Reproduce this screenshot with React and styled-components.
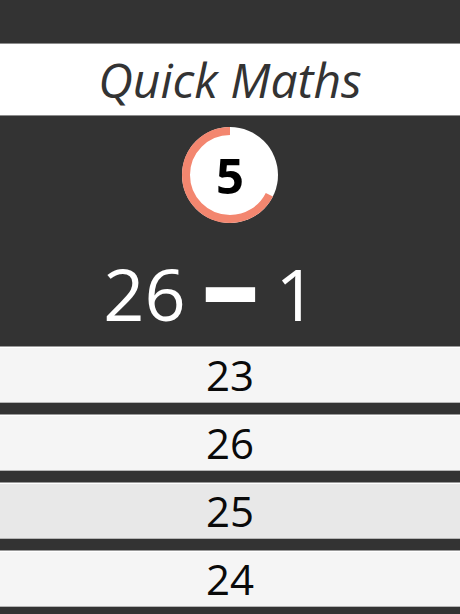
import React from "react";
import styled, { createGlobalStyle } from "styled-components";

const GlobalStyle = createGlobalStyle`
  html, body {
    margin: 0;
    padding: 0;
    background: #333333;
  }
  body {
    font-family: "Open Sans", "Noto Sans", sans-serif;
  }
  * { box-sizing: border-box; }
`;

const Page = styled.div`
  display: flex;
  flex-direction: column;
  width: 100%;
  min-height: 614px;
  background: #333333;
`;

const TopBar = styled.div`
  height: 44px;
  background: #333333;
  border-bottom: 1px solid #8c8c8c;
`;

const Header = styled.header`
  height: 72px;
  background: #ffffff;
  border-bottom: 1px solid #8c8c8c;
  display: flex;
  align-items: center;
  justify-content: center;
`;

const Title = styled.h1`
  margin: 0;
  font-family: "Open Sans", sans-serif;
  font-style: italic;
  font-weight: 400;
  font-size: 48px;
  line-height: 1;
  color: #333333;
`;

const Stage = styled.section`
  height: 230px;
  display: flex;
  flex-direction: column;
  align-items: center;
  padding-top: 11px;
`;

const Timer = styled.div`
  position: relative;
  width: 96px;
  height: 96px;
  display: flex;
  align-items: center;
  justify-content: center;
`;

const Ring = styled.svg`
  position: absolute;
  inset: 0;
`;

const Count = styled.span`
  position: relative;
  font-family: "Open Sans", sans-serif;
  font-weight: 700;
  font-size: 49px;
  line-height: 1;
  color: #000000;
`;

const Equation = styled.div`
  margin-top: 34px;
  display: flex;
  align-items: baseline;
  justify-content: center;
  gap: 20px;
  color: #ffffff;
  font-family: "Open Sans", sans-serif;
  font-size: 72px;
  line-height: 72px;
  padding-right: 40px;
`;

const Operand = styled.span``;

const Operator = styled.span`
  font-family: "DejaVu Sans", sans-serif;
  font-size: 76px;
  line-height: 72px;
  -webkit-text-stroke: 2px #ffffff;
  margin: 0 2px;
`;

const Answers = styled.div`
  display: flex;
  flex-direction: column;
  gap: 11px;
`;

const Answer = styled.button`
  height: 57px;
  width: 100%;
  margin: 0;
  padding: 0;
  border: none;
  border-top: 1px solid #9a9a9a;
  border-bottom: 1px solid #b5b5b5;
  box-shadow: inset 0 1px 0 #ffffff;
  background: ${(p) => (p.$active ? "#e8e8e8" : "#f5f5f5")};
  color: #0a0a0a;
  font-family: "Open Sans", sans-serif;
  font-size: 42px;
  font-weight: 500;
  line-height: 1;
  display: flex;
  align-items: center;
  justify-content: center;
  cursor: pointer;
`;

const R = 44;
const C = 2 * Math.PI * R;
const remaining = 0.675;

export default function App() {
  const answers = [
    { v: 23 },
    { v: 26 },
    { v: 25, active: true },
    { v: 24 },
  ];
  return (
    <Page>
      <GlobalStyle />
      <TopBar />
      <Header>
        <Title>Quick Maths</Title>
      </Header>
      <Stage>
        <Timer>
          <Ring width="96" height="96" viewBox="0 0 96 96">
            <circle cx="48" cy="48" r="48" fill="#ffffff" />
            <circle
              cx="48"
              cy="48"
              r={R}
              fill="none"
              stroke="#f3866f"
              strokeWidth="8"
              strokeDasharray={`${C * remaining} ${C}`}
              transform="rotate(-90 48 48) scale(1 -1) translate(0 -96)"
            />
          </Ring>
          <Count>5</Count>
        </Timer>
        <Equation>
          <Operand>26</Operand>
          <Operator>━</Operator>
          <Operand>1</Operand>
        </Equation>
      </Stage>
      <Answers>
        {answers.map((a) => (
          <Answer key={a.v} $active={a.active}>
            {a.v}
          </Answer>
        ))}
      </Answers>
    </Page>
  );
}
